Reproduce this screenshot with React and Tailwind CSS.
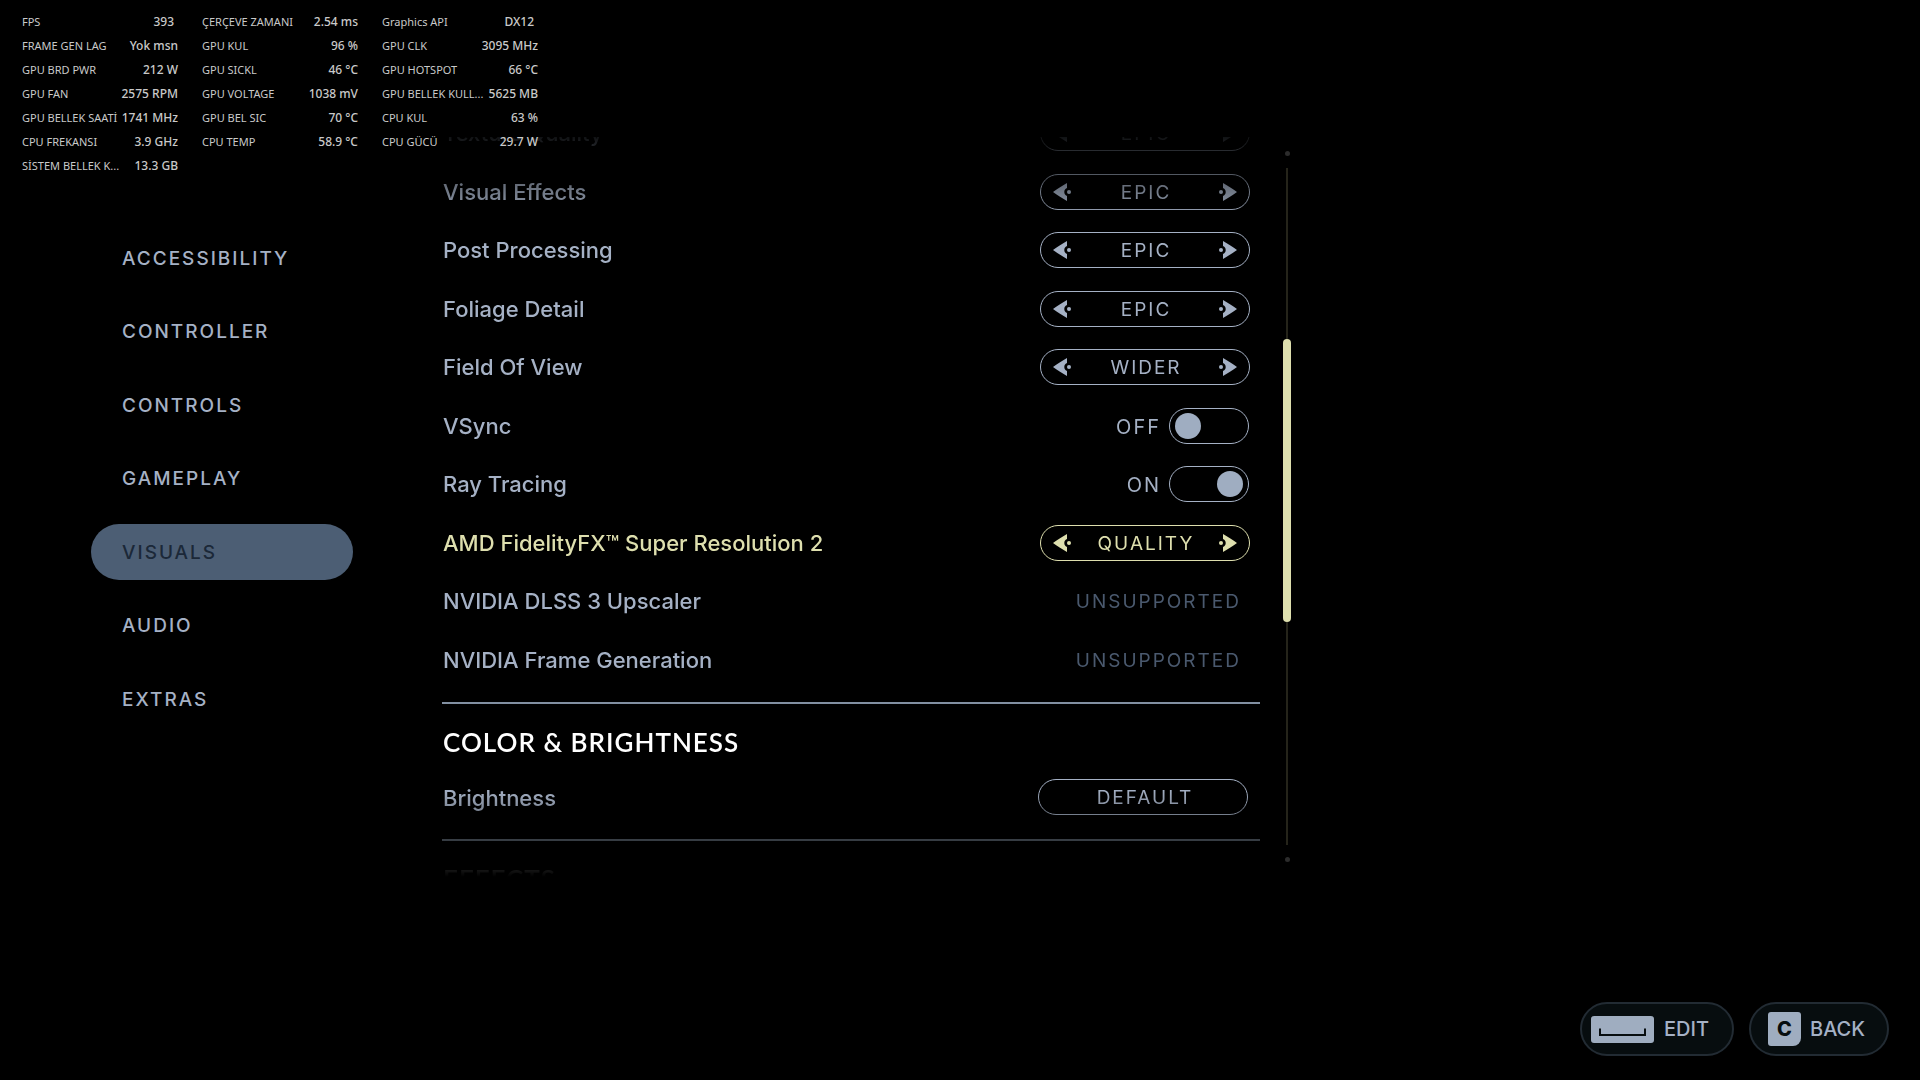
import { useState } from "react";
import clsx from "clsx";

const METRICS = [
  ["FPS", "393"],
  ["ÇERÇEVE ZAMANI", "2.54 ms"],
  ["Graphics API", "DX12"],
  ["FRAME GEN LAG", "Yok msn"],
  ["GPU KUL", "96 %"],
  ["GPU CLK", "3095 MHz"],
  ["GPU BRD PWR", "212 W"],
  ["GPU SICKL", "46 °C"],
  ["GPU HOTSPOT", "66 °C"],
  ["GPU FAN", "2575 RPM"],
  ["GPU VOLTAGE", "1038 mV"],
  ["GPU BELLEK KULL...", "5625 MB"],
  ["GPU BELLEK SAATİ", "1741 MHz"],
  ["GPU BEL SIC", "70 °C"],
  ["CPU KUL", "63 %"],
  ["CPU FREKANSI", "3.9 GHz"],
  ["CPU TEMP", "58.9 °C"],
  ["CPU GÜCÜ", "29.7 W"],
  ["SİSTEM BELLEK K...", "13.3 GB"],
];

const TABS = ["ACCESSIBILITY", "CONTROLLER", "CONTROLS", "GAMEPLAY", "VISUALS", "AUDIO", "EXTRAS"];

const LEVELS = ["LOW", "MEDIUM", "HIGH", "EPIC"];

const SETTINGS = [
  { id: "texture", label: "Texture Quality", type: "stepper", options: LEVELS, initial: 3 },
  { id: "effects", label: "Visual Effects", type: "stepper", options: LEVELS, initial: 3 },
  { id: "post", label: "Post Processing", type: "stepper", options: LEVELS, initial: 3 },
  { id: "foliage", label: "Foliage Detail", type: "stepper", options: LEVELS, initial: 3 },
  { id: "fov", label: "Field Of View", type: "stepper", options: ["DEFAULT", "WIDE", "WIDER"], initial: 2 },
  { id: "vsync", label: "VSync", type: "toggle", initial: false },
  { id: "raytracing", label: "Ray Tracing", type: "toggle", initial: true },
  {
    id: "fsr",
    label: "AMD FidelityFX™ Super Resolution 2",
    type: "stepper",
    options: ["OFF", "PERFORMANCE", "BALANCED", "QUALITY"],
    initial: 3,
    focused: true,
  },
  { id: "dlss", label: "NVIDIA DLSS 3 Upscaler", type: "unsupported" },
  { id: "framegen", label: "NVIDIA Frame Generation", type: "unsupported" },
];

function Arrow({ flipped }) {
  return (
    <svg width="18" height="18" viewBox="0 0 18 18" fill="currentColor" className={clsx(flipped && "rotate-180")}>
      <path d="M0 9C4 6.2 9 3 14 0V5C12 5.8 11.3 7.3 11.3 9C11.3 10.7 12 12.2 14 13V18C9 15 4 11.8 0 9Z" />
      <circle cx="16" cy="9" r="2" />
    </svg>
  );
}

function MetricsOverlay() {
  return (
    <dl className="absolute left-[22px] top-[10px] z-10 grid grid-cols-[156px_156px_156px] gap-x-6 font-['Noto_Sans',sans-serif] text-[#c9c9c9]">
      {METRICS.map(([label, value]) => (
        <div key={label} className="flex h-6 items-center justify-between whitespace-nowrap">
          <dt className="text-[11px]">{label}</dt>
          <dd className={clsx("text-[12px] font-medium", !value.includes(" ") && "pr-1")}>{value}</dd>
        </div>
      ))}
    </dl>
  );
}

function Stepper({ label, options, initial }) {
  const [index, setIndex] = useState(initial);

  return (
    <div
      role="group"
      aria-label={label}
      className="flex h-9 w-[210px] items-center justify-between rounded-full border border-current px-3"
    >
      <button aria-label="Previous" onClick={() => setIndex(Math.max(index - 1, 0))}>
        <Arrow />
      </button>
      <span className="pt-0.5 pl-0.5 text-[19px] tracking-[2px]">{options[index]}</span>
      <button aria-label="Next" onClick={() => setIndex(Math.min(index + 1, options.length - 1))}>
        <Arrow flipped />
      </button>
    </div>
  );
}

function Toggle({ id, initial }) {
  const [on, setOn] = useState(initial);

  return (
    <div className="flex items-center gap-2 pr-px">
      <span className="pt-0.5 text-xl tracking-[2px]">{on ? "ON" : "OFF"}</span>
      <input
        id={id}
        type="checkbox"
        checked={on}
        onChange={(e) => setOn(e.target.checked)}
        className="flex h-9 w-20 appearance-none items-center rounded-full border border-current px-[5px] before:size-[26px] before:rounded-full before:bg-[#9fadc1] checked:justify-end"
      />
    </div>
  );
}

function SettingRow({ id, label, type, options, initial, focused }) {
  return (
    <div className={clsx("flex items-center justify-between pl-px pr-[10px]", focused && "text-[#dedfae]")}>
      <label htmlFor={type === "toggle" ? id : undefined} className="pt-px text-[22px] font-medium">
        {label}
      </label>
      {type === "stepper" && <Stepper label={label} options={options} initial={initial} />}
      {type === "toggle" && <Toggle id={id} initial={initial} />}
      {type === "unsupported" && (
        <span className="pt-0.5 pr-[9px] text-[19px] tracking-[2px] text-[#4a596e]">UNSUPPORTED</span>
      )}
    </div>
  );
}

function SectionTitle({ children }) {
  return (
    <h2 className="pl-px font-['Lato',sans-serif] text-[26px] leading-9 font-semibold tracking-[1px] text-white">
      {children}
    </h2>
  );
}

function ScrollTrack() {
  return (
    <div className="mt-[14px] mb-[15px] ml-[23px] flex w-2 flex-col items-center">
      <span className="size-[5px] rounded-full bg-[#2c2c2c]" />
      <span className="mt-3 w-0.5 flex-[171] bg-[#25241a]" />
      <span className="w-2 flex-[282] rounded-full bg-[#dedfae]" />
      <span className="mb-3 w-0.5 flex-[223] bg-[#25241a]" />
      <span className="size-[5px] rounded-full bg-[#2c2c2c]" />
    </div>
  );
}

export default function App() {
  const [activeTab, setActiveTab] = useState("VISUALS");

  return (
    <div className="relative flex h-screen flex-col overflow-hidden bg-black font-['Inter',sans-serif] text-[#a5b1c5]">
      <MetricsOverlay />

      {/* Settings */}
      <main className="flex min-h-0 w-[67.24%] flex-1 pt-[137px] pb-[125px] pl-[91px]">
        <nav className="mt-[93px] flex h-[497px] w-[262px] shrink-0 flex-col justify-between">
          {TABS.map((tab) => (
            <button
              key={tab}
              onClick={() => setActiveTab(tab)}
              className={clsx(
                "h-14 rounded-full pt-0.5 pl-[31px] text-left text-[19px] font-medium tracking-[2px]",
                activeTab === tab && "bg-[#4c5e74] text-[#1b2838]"
              )}
            >
              {tab}
            </button>
          ))}
        </nav>

        {/* Scrolled list, faded at both ends */}
        <section className="ml-[89px] flex-1 overflow-hidden [mask-image:linear-gradient(to_bottom,rgb(0_0_0/0.1),black_85px,black_calc(100%-88px),transparent)]">
          <div className="-mt-[33px] grid h-[585px] grid-rows-10">
            {SETTINGS.map((setting) => (
              <SettingRow key={setting.id} {...setting} />
            ))}
          </div>

          <div className="mt-[13px] border-t-2 border-[#8290a2] pt-5">
            <SectionTitle>COLOR &amp; BRIGHTNESS</SectionTitle>
            <div className="mt-[19px] flex items-center justify-between pr-3 pl-px">
              <span className="pt-0.5 text-[22px] font-medium">Brightness</span>
              <button className="h-9 w-[210px] rounded-full border border-current pt-0.5 pl-1 text-[19px] tracking-[2px]">
                DEFAULT
              </button>
            </div>
          </div>

          <div className="mt-6 border-t-2 border-[#8290a2] pt-5">
            <SectionTitle>EFFECTS</SectionTitle>
          </div>
        </section>

        <ScrollTrack />
      </main>

      {/* Key hints */}
      <footer className="flex justify-end gap-[15px] pr-[31px] pb-6">
        <button className="flex h-[54px] items-center rounded-full border-2 border-[#222b33] bg-[#070d0f] pr-[23px] pl-[9px] text-xl font-medium">
          <svg width="63" height="27" viewBox="0 0 63 27" className="mr-[10px]">
            <rect width="63" height="27" rx="3" fill="#9fadc0" />
            <path d="M9 12.5V19H54V12.5" fill="none" stroke="#070d0f" strokeWidth="2" />
          </svg>
          EDIT
        </button>
        <button className="flex h-[54px] items-center rounded-full border-2 border-[#222b33] bg-[#070d0f] pr-[22px] pl-[17px] text-xl font-medium">
          <kbd className="mr-[9px] flex h-[34px] w-[33px] items-center justify-center rounded-[3px] rounded-br-lg bg-[#9fadc0] font-['Inter',sans-serif] text-xl font-extrabold text-[#070d0f]">
            C
          </kbd>
          BACK
        </button>
      </footer>
    </div>
  );
}
